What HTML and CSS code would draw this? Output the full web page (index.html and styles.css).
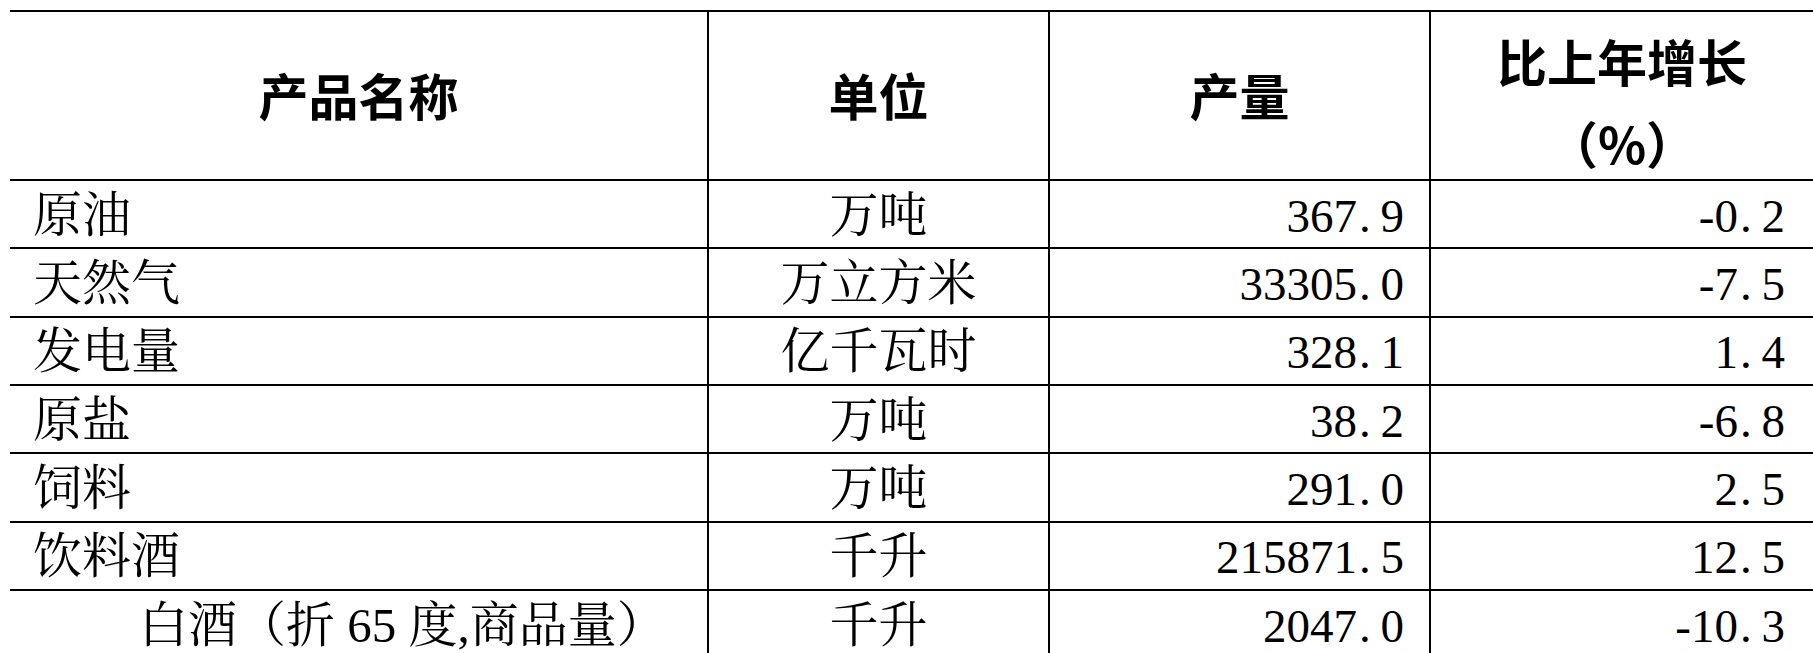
FILE: index.html
```html
<!DOCTYPE html>
<html lang="zh-CN">
<head>
<meta charset="utf-8">
<title>主要工业产品产量</title>
<link rel="stylesheet" href="styles.css">
</head>
<body>
<table class="stats">
  <colgroup>
    <col class="c-name">
    <col class="c-unit">
    <col class="c-qty">
    <col class="c-rate">
  </colgroup>
  <thead>
    <tr>
      <th>产品名称</th>
      <th>单位</th>
      <th>产量</th>
      <th class="two"><div class="two-lines">比上年增长<br>（%）</div></th>
    </tr>
  </thead>
  <tbody>
    <tr><td class="name">原油</td><td class="unit">万吨</td><td class="num">367<span class="pt">.</span>9</td><td class="num last">-0<span class="pt">.</span>2</td></tr>
    <tr><td class="name">天然气</td><td class="unit">万立方米</td><td class="num">33305<span class="pt">.</span>0</td><td class="num last">-7<span class="pt">.</span>5</td></tr>
    <tr><td class="name">发电量</td><td class="unit">亿千瓦时</td><td class="num">328<span class="pt">.</span>1</td><td class="num last">1<span class="pt">.</span>4</td></tr>
    <tr><td class="name">原盐</td><td class="unit">万吨</td><td class="num">38<span class="pt">.</span>2</td><td class="num last">-6<span class="pt">.</span>8</td></tr>
    <tr><td class="name">饲料</td><td class="unit">万吨</td><td class="num">291<span class="pt">.</span>0</td><td class="num last">2<span class="pt">.</span>5</td></tr>
    <tr><td class="name">饮料酒</td><td class="unit">千升</td><td class="num">215871<span class="pt">.</span>5</td><td class="num last">12<span class="pt">.</span>5</td></tr>
    <tr><td class="name sub">白酒（折 65 度,商品量）</td><td class="unit">千升</td><td class="num">2047<span class="pt">.</span>0</td><td class="num last">-10<span class="pt">.</span>3</td></tr>
  </tbody>
</table>
</body>
</html>
```
FILE: styles.css
```css
html, body {
  margin: 0;
  padding: 0;
  background: #fff;
  overflow: hidden;
}

.stats {
  margin: 10px 0 0 10px;
  width: 1803px;
  table-layout: fixed;
  border-collapse: separate;
  border-spacing: 0;
  border-bottom: 2px solid #000;
  font-size: 49px;
  color: #000;
}

.c-name { width: 697px; }
.c-unit { width: 341px; }
.c-qty  { width: 381px; }
.c-rate { width: 384px; }

.stats th,
.stats td {
  border-top: 2px solid #000;
  padding: 0;
  vertical-align: middle;
  white-space: nowrap;
}

.stats th + th,
.stats td + td {
  border-left: 2px solid #000;
}

.stats thead tr { height: 169px; }

.stats th {
  font-family: "Noto Sans CJK SC", "Noto Sans", sans-serif;
  font-size: 50px;
  font-weight: 700;
  line-height: 82px;
  padding-bottom: 3px;
  text-align: center;
}

.stats th.two {
  vertical-align: top;
  padding-top: 7px;
  padding-bottom: 0;
}

.two-lines {
  margin-bottom: -10px;
}

.stats tbody tr { height: 68.33px; }

.stats td {
  font-family: "Liberation Serif", "Noto Serif CJK SC", "Noto Sans CJK SC", serif;
  font-weight: 400;
  line-height: 56px;
  padding-top: 3px;
}

.stats td.name { text-align: left; padding-left: 23px; }
.stats td.sub { padding-left: 129px; }
.stats td.unit { text-align: center; }
.stats td.num { text-align: right; padding-right: 25px; font-size: 47px; }
.stats td.last { padding-right: 28px; }

.pt {
  display: inline-block;
  width: 0.5em;
  text-align: left;
  padding-left: 2px;
  box-sizing: border-box;
}
```
